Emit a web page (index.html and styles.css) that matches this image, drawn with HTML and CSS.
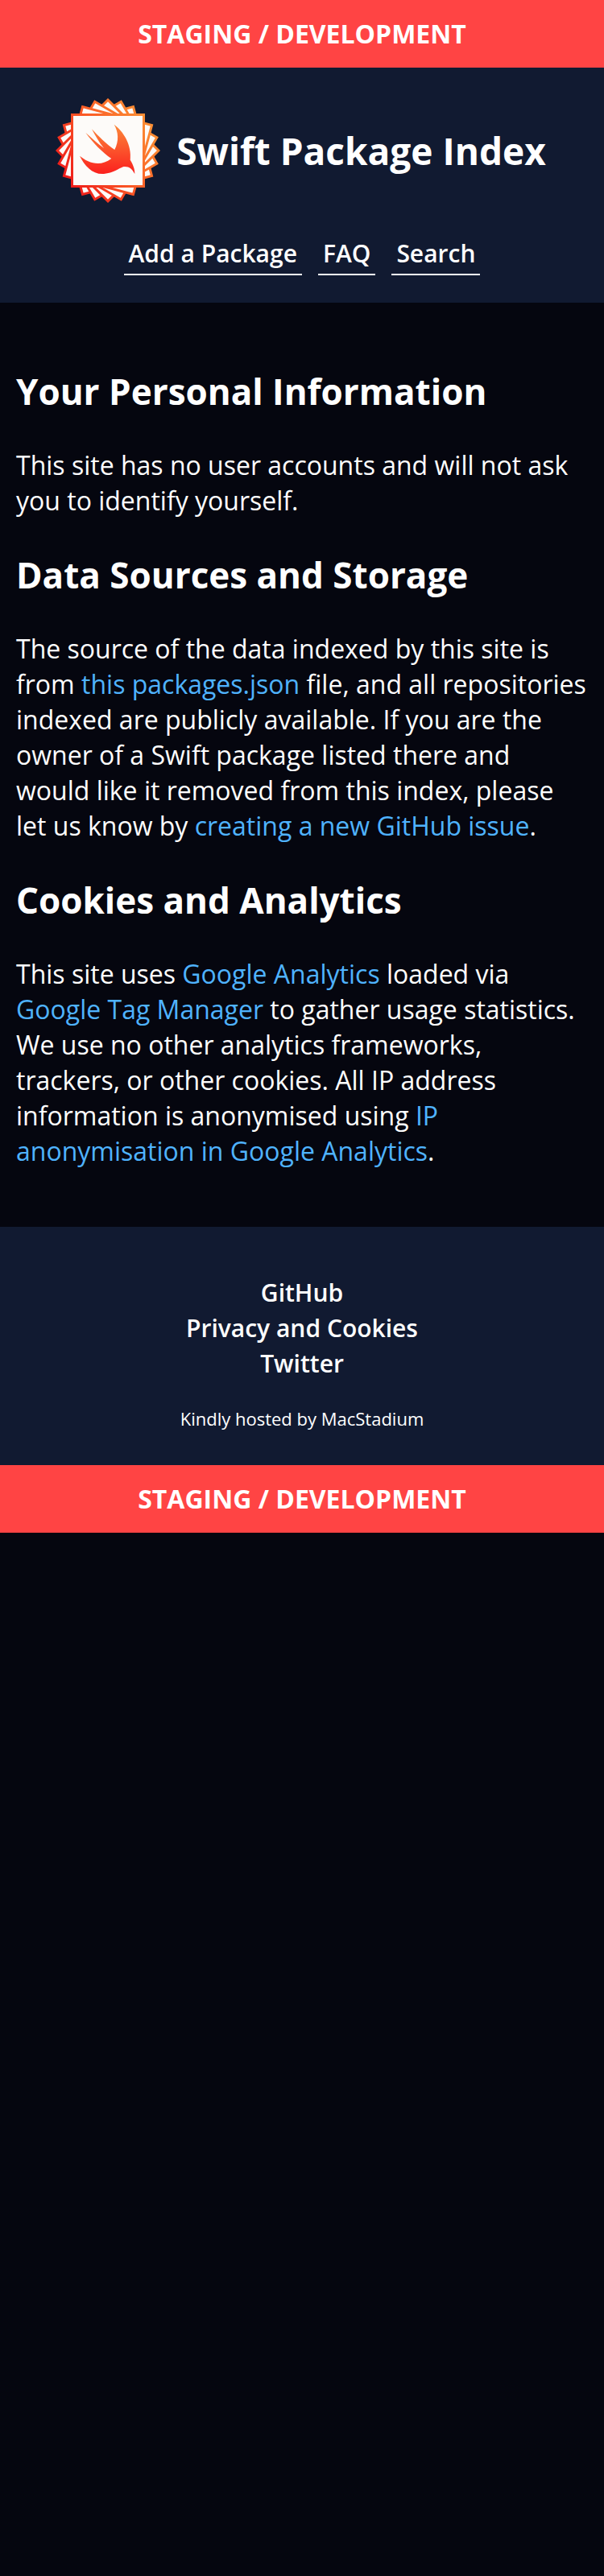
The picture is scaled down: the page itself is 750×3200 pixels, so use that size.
FILE: index.html
```html
<!DOCTYPE html>
<html>
<head>
	<meta charset="UTF-8">
	<title>Privacy and Cookies</title>
	<link rel="stylesheet" href="styles.css">
</head>
<body>
	<div class="staging">STAGING / DEVELOPMENT</div>

	<header class="site-header">
		<a class="brand" href="#">
			<svg class="logo" viewBox="0 0 130 130" width="130" height="130">
				<defs>
					<linearGradient id="edge" gradientUnits="userSpaceOnUse" x1="10" y1="100" x2="120" y2="25">
						<stop offset="0" stop-color="#ee1a1a"/>
						<stop offset="0.5" stop-color="#fb5a26"/>
						<stop offset="1" stop-color="#fb9335"/>
					</linearGradient>
					<linearGradient id="bird" gradientUnits="userSpaceOnUse" x1="70" y1="32" x2="70" y2="96">
						<stop offset="0" stop-color="#fb8a3a"/>
						<stop offset="1" stop-color="#fb1d1d"/>
					</linearGradient>
				</defs>
				<g fill="#fdfbf9" stroke="url(#edge)" stroke-width="3">
					<polygon points="33.53,119.5 10.5,33.53 96.47,10.5 119.5,96.47"/>
					<polygon points="48.71,125.79 4.21,48.71 81.29,4.21 125.79,81.29"/>
					<polygon points="65,127.93 2.07,65 65,2.07 127.93,65"/>
					<polygon points="81.29,125.79 4.21,81.29 48.71,4.21 125.79,48.71"/>
					<polygon points="96.47,119.5 10.5,96.47 33.53,10.5 119.5,33.53"/>
					<rect x="20.5" y="20.5" width="89" height="89"/>
				</g>
				<path fill="url(#bird)" d="M72.7 32.7C84 41 95 58 92.7 76.7C96 82 98.5 88 98.3 94C95 88 92 85 86 85C80 85 76 92 60 94C46 95 36 84 30 71.7C40 80 55 86 69.3 75C58 67 47 56 37.3 42.7C44 49 52 56 60 62C54 55 49 46 45 38.3C53 47 63 57 73.3 64C79 53 78 42 72.7 32.7Z"/>
			</svg>
			<span class="brand-name">Swift Package Index</span>
		</a>
		<nav class="main-nav">
			<a href="#">Add a Package</a>
			<a href="#">FAQ</a>
			<a href="#">Search</a>
		</nav>
	</header>

	<main class="content">
		<h2>Your Personal Information</h2>
		<p>This site has no user accounts and will not ask you to identify yourself.</p>

		<h3>Data Sources and Storage</h3>
		<p>The source of the data indexed by this site is from <a href="#">this packages.json</a> file, and all repositories indexed are publicly available. If you are the owner of a Swift package listed there and would like it removed from this index, please let us know by <a href="#">creating a new GitHub issue</a>.</p>

		<h3>Cookies and Analytics</h3>
		<p>This site uses <a href="#">Google Analytics</a> loaded via <a href="#">Google Tag Manager</a> to gather usage statistics. We use no other analytics frameworks, trackers, or other cookies. All IP address information is anonymised using <a href="#">IP anonymisation in Google Analytics</a>.</p>
	</main>

	<footer class="site-footer">
		<ul class="footer-links">
			<li><a href="#">GitHub</a></li>
			<li><a href="#">Privacy and Cookies</a></li>
			<li><a href="#">Twitter</a></li>
		</ul>
		<small>Kindly hosted by MacStadium</small>
	</footer>

	<div class="staging">STAGING / DEVELOPMENT</div>
</body>
</html>
```

FILE: styles.css
```css
body {
	margin: 0;
	min-height: 3200px;
	background-color: #05060f;
	color: #fff;
	font-family: "Open Sans", sans-serif;
	font-size: 32px;
	line-height: 44px;
}

a {
	color: inherit;
	text-decoration: none;
}

.staging {
	height: 84px;
	line-height: 84px;
	background-color: #ff4444;
	font-size: 32px;
	font-weight: 700;
	text-align: center;
}

.site-header {
	height: 292px;
	box-sizing: border-box;
	padding-top: 38px;
	background-color: #111a31;
}

.brand {
	display: flex;
	align-items: center;
	justify-content: center;
	gap: 20px;
	padding-right: 3px;
}

.logo {
	flex: none;
}

.brand-name {
	font-size: 46px;
	font-weight: 700;
}

.main-nav {
	display: flex;
	justify-content: center;
	gap: 20px;
	margin-top: 41px;
	font-size: 30px;
}

.main-nav a {
	padding: 0 6px 3px;
	border-bottom: 2px solid #fff;
	font-weight: 600;
}

.content {
	padding: 40px 20px 72px;
}

.content h2,
.content h3 {
	margin: 40px 0;
	font-size: 44px;
	line-height: 60px;
}

.content p {
	margin: 0;
}

.content p a {
	color: #4fb3ff;
}

.site-footer {
	height: 296px;
	box-sizing: border-box;
	padding-top: 60px;
	background-color: #111a31;
	text-align: center;
}

.footer-links {
	margin: 0 0 28px;
	padding: 0;
	list-style: none;
	font-size: 30px;
	font-weight: 600;
}

.site-footer small {
	display: block;
	font-size: 22px;
	line-height: 36px;
}
```
